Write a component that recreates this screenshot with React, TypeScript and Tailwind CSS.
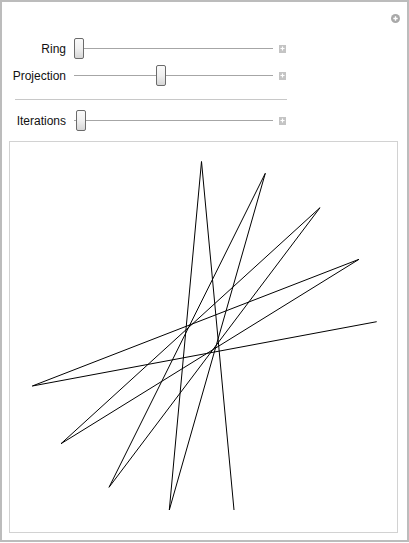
import React from "react";

const pts: [number, number][] = [
  [376.7, 321.7],
  [32.3, 386],
  [359, 259.3],
  [61, 443.7],
  [320, 207.7],
  [109, 487.3],
  [265.3, 173.3],
  [169.3, 510],
  [201.5, 161.5],
  [234, 510],
];

function PlusBox() {
  return (
    <div className="w-[7px] h-[8px] bg-[#c4c4c4] flex items-center justify-center">
      <svg width="5" height="5" viewBox="0 0 5 5">
        <path d="M2.5 0.5v4M0.5 2.5h4" stroke="#fff" strokeWidth="1.2" />
      </svg>
    </div>
  );
}

function Slider({ left }: { left: number }) {
  return (
    <div className="relative w-[199px] h-[21px]">
      <div className="absolute left-0 right-0 top-[10px] h-px bg-[#a6a6a6]" />
      <div
        className="absolute top-0 w-[10px] h-[21px] rounded-[2px] border border-[#6b6b6b] bg-gradient-to-b from-[#fafafa] via-[#f0f0f0] to-[#d6d6d6]"
        style={{ left }}
      />
    </div>
  );
}

function Row({ label, value }: { label: string; value: number }) {
  return (
    <div className="flex items-center h-[21px]">
      <div className="w-[64px] text-right text-[12px] text-[#111] leading-none">{label}</div>
      <div className="ml-[8px]">
        <Slider left={value} />
      </div>
      <div className="ml-[6px]">
        <PlusBox />
      </div>
    </div>
  );
}

export default function App() {
  const d = pts.map((p, i) => `${i === 0 ? "M" : "L"}${p[0]} ${p[1]}`).join(" ");
  return (
    <div
      className="w-[409px] h-[542px] border-2 border-[#bcbcbc] bg-white flex flex-col"
      style={{ fontFamily: '"Liberation Sans", Arial, sans-serif' }}
    >
      <div className="h-[36px] flex justify-end items-start pt-[12px] pr-[7px]">
        <div className="w-[9px] h-[9px] rounded-full bg-[#a9a9a9] flex items-center justify-center">
          <svg width="5" height="5" viewBox="0 0 5 5">
            <path d="M2.5 0.3v4.4M0.3 2.5h4.4" stroke="#fff" strokeWidth="1.4" />
          </svg>
        </div>
      </div>
      <Row label="Ring" value={0} />
      <div className="mt-[6px]">
        <Row label="Projection" value={82} />
      </div>
      <div className="mt-[13px] ml-[13px] w-[272px] h-px bg-[#c8c8c8]" />
      <div className="mt-[10px]">
        <Row label="Iterations" value={2} />
      </div>
      <div className="mt-[10px] ml-[7px] w-[389px] h-[392px] border border-[#d2d2d2]">
        <svg width="387" height="390" viewBox="10 142 387 390">
          <path d={d} fill="none" stroke="#000" strokeWidth="1" strokeLinejoin="miter" />
        </svg>
      </div>
    </div>
  );
}
